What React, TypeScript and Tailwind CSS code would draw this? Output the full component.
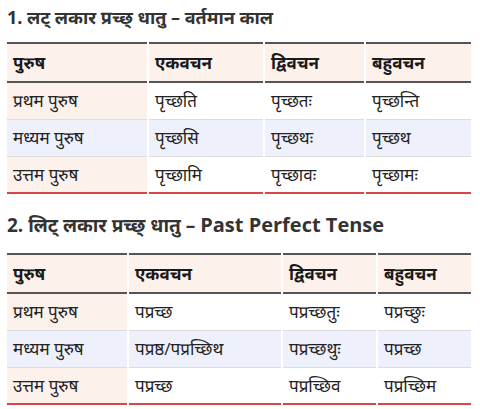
const font = { fontFamily: '"Open Sans", "Noto Sans Devanagari", "Noto Sans", sans-serif' };

type Table = {
  title: string;
  latin?: string;
  widths: number[];
  rows: string[][];
};

const head = ['पुरुष', 'एकवचन', 'द्विवचन', 'बहुवचन'];

const tables: Table[] = [
  {
    title: '1. लट् लकार प्रच्छ् धातु – वर्तमान काल',
    widths: [140, 114, 99, 105],
    rows: [
      ['प्रथम पुरुष', 'पृच्छति', 'पृच्छतः', 'पृच्छन्ति'],
      ['मध्यम पुरुष', 'पृच्छसि', 'पृच्छथः', 'पृच्छथ'],
      ['उत्तम पुरुष', 'पृच्छामि', 'पृच्छावः', 'पृच्छामः'],
    ],
  },
  {
    title: '2. लिट् लकार प्रच्छ् धातु – ',
    latin: 'Past Perfect Tense',
    widths: [120, 152, 93, 93],
    rows: [
      ['प्रथम पुरुष', 'पप्रच्छ', 'पप्रच्छतुः', 'पप्रच्छुः'],
      ['मध्यम पुरुष', 'पप्रष्ठ/पप्रच्छिथ', 'पप्रच्छथुः', 'पप्रच्छ'],
      ['उत्तम पुरुष', 'पप्रच्छ', 'पप्रच्छिव', 'पप्रच्छिम'],
    ],
  },
];

function ConjTable({ t }: { t: Table }) {
  return (
    <table className="w-[468px] border-separate border-spacing-x-[2px] border-spacing-y-0 table-fixed">
      <colgroup>
        {t.widths.map((w, i) => (
          <col key={i} style={{ width: w }} />
        ))}
      </colgroup>
      <thead>
        <tr>
          {head.map((h) => (
            <th
              key={h}
              className="h-[41px] bg-[#fdf1ec] border-y-2 border-[#555] px-[6px] text-left text-[17px] font-bold text-[#1a1a1a]"
            >
              {h}
            </th>
          ))}
        </tr>
      </thead>
      <tbody>
        {t.rows.map((r, ri) => {
          const last = ri === t.rows.length - 1;
          return (
            <tr key={ri} className={ri === 1 ? 'bg-[#eef0fb]' : ''}>
              {r.map((c, ci) => (
                <td
                  key={ci}
                  className={
                    'h-[37px] px-[6px] text-[17px] text-[#222] ' +
                    (last ? 'border-b-2 border-[#d9464a] ' : 'border-b border-[#dcdcdc] ') +
                    (ci === 0 && ri !== 1 ? 'bg-[#fdf1ec]' : '')
                  }
                >
                  {c}
                </td>
              ))}
            </tr>
          );
        })}
      </tbody>
    </table>
  );
}

export default function App() {
  return (
    <div className="w-[480px] h-[409px] bg-white px-[5px] overflow-hidden" style={font}>
      <h2 className="px-[2px] pt-[3px] h-[31px] leading-[28px] text-[18px] font-bold text-[#333] mb-[11px] whitespace-nowrap">
        {tables[0].title}
      </h2>
      <ConjTable t={tables[0]} />
      <h2 className="px-[2px] mt-[16px] h-[32px] leading-[30px] text-[19px] font-bold text-[#333] mb-[11px] whitespace-nowrap">
        {tables[1].title}
        <span className="text-[20px]">{tables[1].latin}</span>
      </h2>
      <ConjTable t={tables[1]} />
    </div>
  );
}
